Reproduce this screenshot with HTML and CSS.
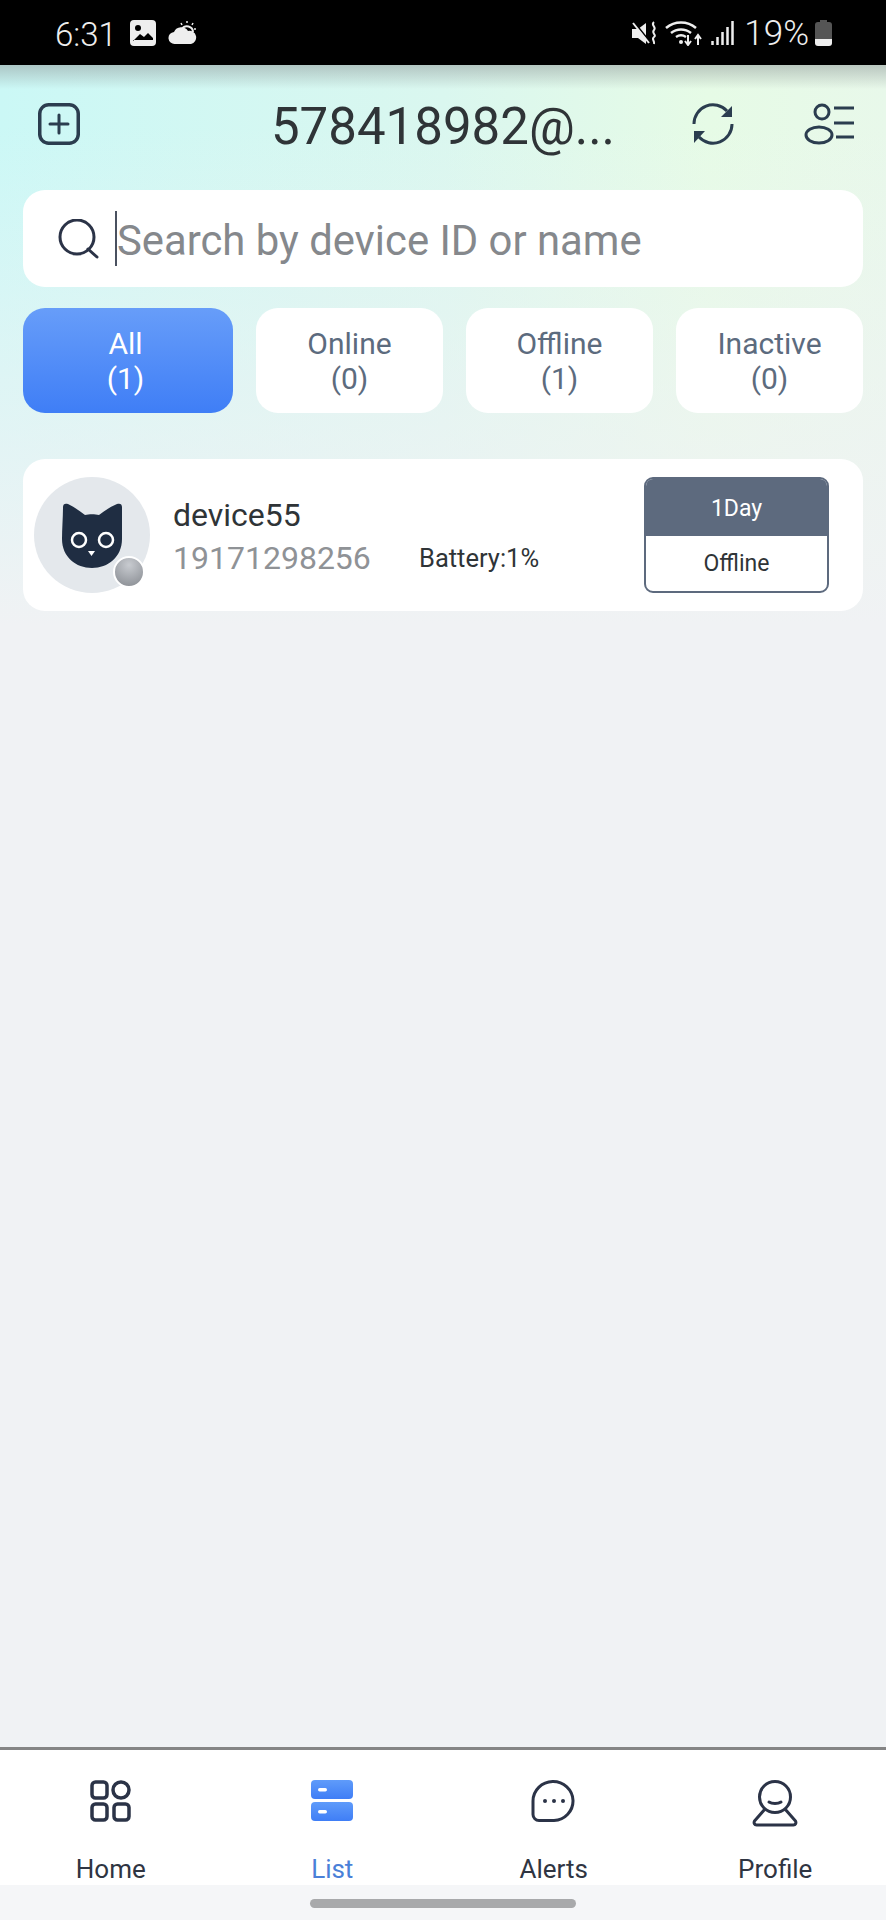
FILE: index.html
```html
<!DOCTYPE html>
<html lang="en">
<head>
    <meta charset="UTF-8">
    <title>Device list</title>
    <link rel="stylesheet" href="styles.css">
</head>
<body>
    <div class="app">
        <!-- Status bar -->
        <div class="statusbar">
            <div class="status-left">
                <span class="clock">6:31</span>
                <svg class="st-image" width="26" height="26" viewBox="0 0 26 26">
                    <rect width="26" height="26" rx="4" fill="#eee"/>
                    <circle cx="8" cy="8" r="3" fill="#000"/>
                    <path d="M3 21l7-7 4 3 4-4 5 5v2H3z" fill="#000"/>
                    <path d="M3 22h20" stroke="#eee" stroke-width="2"/>
                </svg>
                <svg class="st-cloud" width="29" height="24" viewBox="0 0 29 24">
                    <path d="M7 23a6 6 0 0 1-1-12 8 8 0 0 1 14-1 6.500 6.500 0 0 1 3 13z" fill="#eee"/>
                    <path d="M14 8a6 6 0 0 1 11 3" fill="none" stroke="#eee" stroke-width="2"/>
                    <path d="M19 0v2M13 2l1 2M25 2l-1 2M28 8h-2" stroke="#eee" stroke-width="1.500"/>
                </svg>
            </div>
            <div class="status-right">
                <svg class="st-mute" width="26" height="24" viewBox="0 0 26 24">
                    <path d="M0 8h6l8-6v21l-8-6H0z" fill="#eee"/>
                    <path d="M2 1l16 20" stroke="#000" stroke-width="2"/>
                    <path d="M1 2l16 20" stroke="#eee" stroke-width="2"/>
                    <path d="M22 1c-4 3 3 5 0 8s3 5 0 7 1 4 0 7" fill="none" stroke="#eee" stroke-width="2"/>
                </svg>
                <svg class="st-wifi" width="37" height="27" viewBox="0 0 37 27">
                    <path d="M1 9a23 23 0 0 1 30 0M6 14a16 16 0 0 1 20 0M11 18a9 9 0 0 1 10 0" fill="none" stroke="#eee" stroke-width="2.500"/>
                    <circle cx="16" cy="23" r="2" fill="#eee"/>
                    <path d="M23 16v9M20 22l3 4 3-4M33 26v-9M30 20l3-4 3 4" fill="none" stroke="#eee" stroke-width="2"/>
                </svg>
                <svg class="st-signal" width="23" height="24" viewBox="0 0 23 24">
                    <path d="M1.500 20v4M6.500 16v8M11.500 11v13M16.500 6v18M21.500 0v24" stroke="#eee" stroke-width="2.500"/>
                </svg>
                <span class="battery-pct">19%</span>
                <div class="st-battery"><div class="st-battery-cap"></div><div class="st-battery-body"></div></div>
            </div>
        </div>

        <!-- Contenu principal -->
        <div class="main">
            <div class="topbar">
                <svg width="42" height="42" viewBox="0 0 42 42" fill="none" stroke="#2b3d4f" stroke-width="3.500">
                    <rect x="1.750" y="1.750" width="38.500" height="38.500" rx="9"/>
                    <path d="M21 12v18M12 21h18" stroke-width="3" stroke-linecap="round"/>
                </svg>
                <div class="title">578418982@...</div>
                <div class="topbar-right">
                    <svg width="42" height="42" viewBox="0 0 42 42" fill="none" stroke="#2b3d4f" stroke-width="3">
                        <path d="M2 21A19 19 0 0 1 35 8"/>
                        <path d="M40 21A19 19 0 0 1 7 34"/>
                        <path d="M40 3v11H29z" fill="#2b3d4f" stroke="none"/>
                        <path d="M2 40V28h11z" fill="#2b3d4f" stroke="none"/>
                    </svg>
                    <svg width="50" height="42" viewBox="0 0 50 42" fill="none" stroke="#2b3d4f" stroke-width="3">
                        <circle cx="18" cy="9" r="7"/>
                        <ellipse cx="15" cy="32" rx="13" ry="8"/>
                        <path d="M30 5h20M30 20h20M32 34h18"/>
                    </svg>
                </div>
            </div>

            <div class="search">
                <svg width="42" height="40" viewBox="0 0 42 40" fill="none" stroke="#2b3347" stroke-width="3">
                    <circle cx="19" cy="18" r="17"/>
                    <path d="M30 30l9 8" stroke-linecap="round"/>
                </svg>
                <span class="cursor"></span>
                <span class="search-text">Search by device ID or name</span>
            </div>

            <div class="tabs">
                <div class="tab tab-active">All<br>(1)</div>
                <div class="tab">Online<br>(0)</div>
                <div class="tab">Offline<br>(1)</div>
                <div class="tab">Inactive<br>(0)</div>
            </div>

            <div class="card">
                <div class="avatar">
                    <svg width="60" height="65" viewBox="0 0 60 65">
                        <path d="M1 4C1 1 3 0 6 1C12 4 18 8 23 12C27 11 33 11 37 12C42 8 48 4 55 1C58 0 60 1 60 4C60 14 60 26 60 36C60 54 46 65 30 65S0 54 0 36C0 26 1 14 1 4z" fill="#1f2d42"/>
                        <circle cx="17" cy="37" r="7" fill="none" stroke="#fff" stroke-width="2.500"/>
                        <circle cx="44" cy="37" r="7" fill="none" stroke="#fff" stroke-width="2.500"/>
                        <path d="M26 48h7l-3.500 5z" fill="#fff"/>
                    </svg>
                    <span class="dot"></span>
                </div>
                <div class="info">
                    <div class="name">device55</div>
                    <div class="number">19171298256</div>
                </div>
                <div class="battery">Battery:1%</div>
                <div class="badge">
                    <div class="badge-top">1Day</div>
                    <div class="badge-bottom">Offline</div>
                </div>
            </div>
        </div>

        <!-- Menu de navigation -->
        <div class="nav">
            <div class="nav-item">
                <svg width="42" height="42" viewBox="0 0 42 42" fill="none" stroke="#2b3347" stroke-width="3.500">
                    <rect x="2" y="2" width="15" height="16" rx="3.500"/>
                    <circle cx="31" cy="10" r="8"/>
                    <rect x="2" y="24" width="15" height="16" rx="3.500"/>
                    <rect x="24" y="24" width="15" height="16" rx="3.500"/>
                </svg>
                <span>Home</span>
            </div>
            <div class="nav-item nav-active">
                <svg width="42" height="42" viewBox="0 0 42 42">
                    <defs>
                        <linearGradient id="listblue" x1="0" y1="0" x2="0" y2="1">
                            <stop offset="0" stop-color="#5f9bfa"/>
                            <stop offset="1" stop-color="#3f7ef6"/>
                        </linearGradient>
                    </defs>
                    <rect width="42" height="19" rx="4" fill="url(#listblue)"/>
                    <rect y="22" width="42" height="19" rx="4" fill="url(#listblue)"/>
                    <rect x="7" y="8" width="9" height="3.500" rx="1.700" fill="#fff"/>
                    <rect x="7" y="30" width="9" height="3.500" rx="1.700" fill="#fff"/>
                </svg>
                <span>List</span>
            </div>
            <div class="nav-item">
                <svg width="46" height="42" viewBox="0 0 46 42" fill="none" stroke="#2b3347" stroke-width="3">
                    <path d="M2 21a20 19.500 0 1 1 21 19.500H8a6 6 0 0 1-6-6z"/>
                    <circle cx="14" cy="21" r="2" fill="#2b3347" stroke="none"/>
                    <circle cx="23" cy="21" r="2" fill="#2b3347" stroke="none"/>
                    <circle cx="32" cy="21" r="2" fill="#2b3347" stroke="none"/>
                </svg>
                <span>Alerts</span>
            </div>
            <div class="nav-item">
                <svg width="46" height="47" viewBox="0 0 46 47" fill="none" stroke="#2b3347" stroke-width="3" stroke-linejoin="round">
                    <circle cx="23" cy="17" r="15.500"/>
                    <path d="M13 29L2.500 41c-1 2 0 4 2 4h37c2 0 3-2 2-4L33 29"/>
                    <path d="M17 22c3 2 9 2 12 0" stroke-linecap="round"/>
                </svg>
                <span>Profile</span>
            </div>
        </div>

        <div class="homebar"><div class="homebar-pill"></div></div>
    </div>
</body>
</html>
```

FILE: styles.css
```css
/* Global */
body {
    margin: 0;
    padding: 0;
    font-family: Roboto, "Liberation Sans", sans-serif;
    background: #f0f2f4;
    overflow: hidden;
}

svg {
    display: block;
    flex-shrink: 0;
}

.app {
    width: 886px;
    height: 1920px;
    display: flex;
    flex-direction: column;
}

/* Status bar */
.statusbar {
    height: 65px;
    flex-shrink: 0;
    background: #000000;
    color: #eeeeee;
    display: flex;
    justify-content: space-between;
    align-items: center;
    padding: 0 54px 0 55px;
}

.status-left, .status-right {
    display: flex;
    align-items: center;
}

.clock {
    font-size: 33px;
    font-weight: 300;
    margin-right: 13px;
    padding-top: 3px;
}

.st-cloud {
    margin-left: 12px;
}

.status-right .st-mute {
    margin-right: 7px;
}

.status-right .st-wifi {
    margin-right: 9px;
}

.status-right .st-signal {
    margin-right: 10px;
}

.battery-pct {
    font-size: 35px;
    font-weight: 300;
    margin-right: 6px;
    padding-top: 2px;
}

.st-battery {
    width: 17px;
    display: flex;
    flex-direction: column;
    align-items: center;
}

.st-battery-cap {
    width: 7px;
    height: 2px;
    background: #555555;
}

.st-battery-body {
    width: 17px;
    height: 24px;
    border-radius: 3px;
    background: linear-gradient(180deg, #555555 72%, #eeeeee 72%);
}

/* Contenu principal */
.main {
    flex: 1;
    padding: 0 23px;
    background:
        linear-gradient(180deg, rgba(140, 150, 150, 0.5) 0, rgba(140, 150, 150, 0) 24px),
        linear-gradient(180deg, rgba(240, 242, 244, 0) 60px, #f0f2f4 560px),
        linear-gradient(90deg, #cbf8f6 0%, #daf7ef 50%, #e6fbe6 80%, #e8f8ea 100%);
}

.topbar {
    height: 118px;
    margin-bottom: 7px;
    padding: 0 9px 0 15px;
    display: grid;
    grid-template-columns: 1fr auto 1fr;
    align-items: center;
}

.title {
    font-size: 51px;
    color: #2f3437;
    white-space: nowrap;
    padding: 4px 6px 0 0;
}

.topbar-right {
    display: flex;
    justify-content: flex-end;
    gap: 70px;
}

/* Recherche */
.search {
    height: 97px;
    background: #ffffff;
    border-radius: 22px;
    display: flex;
    align-items: center;
    padding-left: 35px;
    margin-bottom: 21px;
}

.cursor {
    width: 2px;
    height: 55px;
    background: #4a5160;
    margin-left: 15px;
}

.search-text {
    font-size: 41.800px;
    color: #85888c;
    white-space: nowrap;
    padding-top: 4px;
}

/* Onglets */
.tabs {
    display: grid;
    grid-template-columns: 210px 1fr 1fr 1fr;
    gap: 23px;
    margin-bottom: 46px;
}

.tab {
    height: 105px;
    box-sizing: border-box;
    padding-top: 18px;
    background: #ffffff;
    border-radius: 22px;
    text-align: center;
    font-size: 30px;
    line-height: 35px;
    color: #5c6b7e;
}

.tab-active {
    background: linear-gradient(180deg, #679df9, #3f7ef6);
    color: #ffffff;
    padding-right: 5px;
}

/* Carte appareil */
.card {
    height: 152px;
    box-sizing: border-box;
    background: #ffffff;
    border-radius: 22px;
    display: flex;
    align-items: center;
    padding: 0 34px 0 11px;
}

.avatar {
    width: 116px;
    height: 116px;
    border-radius: 50%;
    background: #e4e8ec;
    display: flex;
    align-items: center;
    justify-content: center;
    position: relative;
    flex-shrink: 0;
}

.dot {
    position: absolute;
    left: 79px;
    top: 79px;
    width: 28px;
    height: 28px;
    box-sizing: content-box;
    border: 2px solid #ffffff;
    border-radius: 50%;
    background: radial-gradient(circle at 50% 25%, #c8cbd0, #85898f);
}

.info {
    margin-left: 23px;
    width: 246px;
    padding-top: 2px;
}

.name {
    font-size: 32px;
    line-height: 44px;
    color: #2f3437;
}

.number {
    font-size: 32px;
    line-height: 43px;
    color: #8f9296;
}

.battery {
    font-size: 25.500px;
    color: #2f3437;
    margin-top: 46px;
    flex: 1;
}

.badge {
    width: 185px;
    height: 116px;
    box-sizing: border-box;
    border: 2px solid #5d6a7e;
    border-radius: 9px;
    overflow: hidden;
    text-align: center;
    flex-shrink: 0;
}

.badge-top {
    height: 57px;
    line-height: 59px;
    background: #5d6a7e;
    color: #ffffff;
    font-size: 23px;
}

.badge-bottom {
    line-height: 55px;
    color: #2f3437;
    font-size: 23px;
}

/* Menu de navigation */
.nav {
    height: 138px;
    box-sizing: border-box;
    flex-shrink: 0;
    border-top: 3px solid #858585;
    background: #ffffff;
    display: grid;
    grid-template-columns: repeat(4, 1fr);
}

.nav-item {
    display: flex;
    flex-direction: column;
    align-items: center;
    padding-top: 30px;
    position: relative;
    font-size: 26px;
    color: #2f3542;
}

.nav-item span {
    position: absolute;
    top: 104px;
    line-height: 30px;
}

.nav-active {
    color: #4a80d8;
}

.homebar {
    height: 35px;
    flex-shrink: 0;
    background: #f5f6f8;
    display: flex;
    justify-content: center;
    padding-top: 14px;
    box-sizing: border-box;
}

.homebar-pill {
    width: 266px;
    height: 9px;
    border-radius: 5px;
    background: #a8a9ab;
}
```
